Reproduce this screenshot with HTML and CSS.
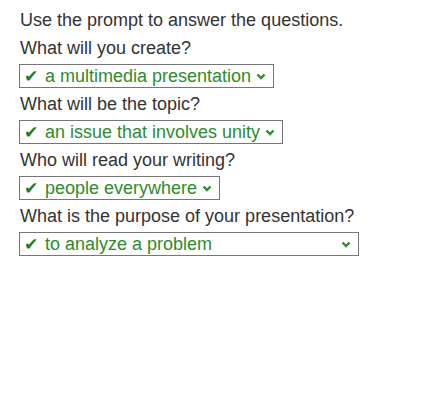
FILE: index.html
```html
<!DOCTYPE html>
<html>
<head>
<meta charset="utf-8">
<link rel="stylesheet" href="styles.css">
</head>
<body>
<div class="quiz">
  <div class="label">Use the prompt to answer the questions.</div>
  <div class="label">What will you create?</div>
  <div class="answer"><span class="check">✔</span><span class="text">a multimedia presentation</span><svg class="chev" viewBox="0 0 10 7" width="10" height="7"><path d="M1.5 1.5 L5 5 L8.5 1.5" fill="none" stroke="currentColor" stroke-width="2.4"/></svg></div>
  <div class="label">What will be the topic?</div>
  <div class="answer"><span class="check">✔</span><span class="text">an issue that involves unity</span><svg class="chev" viewBox="0 0 10 7" width="10" height="7"><path d="M1.5 1.5 L5 5 L8.5 1.5" fill="none" stroke="currentColor" stroke-width="2.4"/></svg></div>
  <div class="label">Who will read your writing?</div>
  <div class="answer"><span class="check">✔</span><span class="text">people everywhere</span><svg class="chev" viewBox="0 0 10 7" width="10" height="7"><path d="M1.5 1.5 L5 5 L8.5 1.5" fill="none" stroke="currentColor" stroke-width="2.4"/></svg></div>
  <div class="label">What is the purpose of your presentation?</div>
  <div class="answer wide"><span class="check">✔</span><span class="text">to analyze a problem</span><svg class="chev" viewBox="0 0 10 7" width="10" height="7"><path d="M1.5 1.5 L5 5 L8.5 1.5" fill="none" stroke="currentColor" stroke-width="2.4"/></svg></div>
</div>
</body>
</html>
```

FILE: styles.css
```css
html, body {
  margin: 0;
  background: #fff;
}
.quiz {
  display: flex;
  flex-direction: column;
  align-items: flex-start;
  padding: 6px 19px;
  font-family: "Liberation Sans", Arial, sans-serif;
  font-size: 18px;
}
.label {
  line-height: 28px;
  color: #333;
  padding-left: 1px;
}
.answer {
  display: flex;
  align-items: center;
  box-sizing: border-box;
  height: 24px;
  margin: 2px 0 2px;
  padding: 0 7px 0 4px;
  border: 1px solid #767676;
  color: #2e8b2e;
  line-height: 22px;
}
.answer.wide {
  width: 340px;
}
.check {
  display: inline-block;
  flex: none;
  width: 21px;
  color: #1f7a1f;
  font-family: "DejaVu Sans", sans-serif;
  font-size: 17px;
}
.text {
  flex: 1;
}
.chev {
  margin-left: 5px;
  color: #2e8b2e;
}
```
